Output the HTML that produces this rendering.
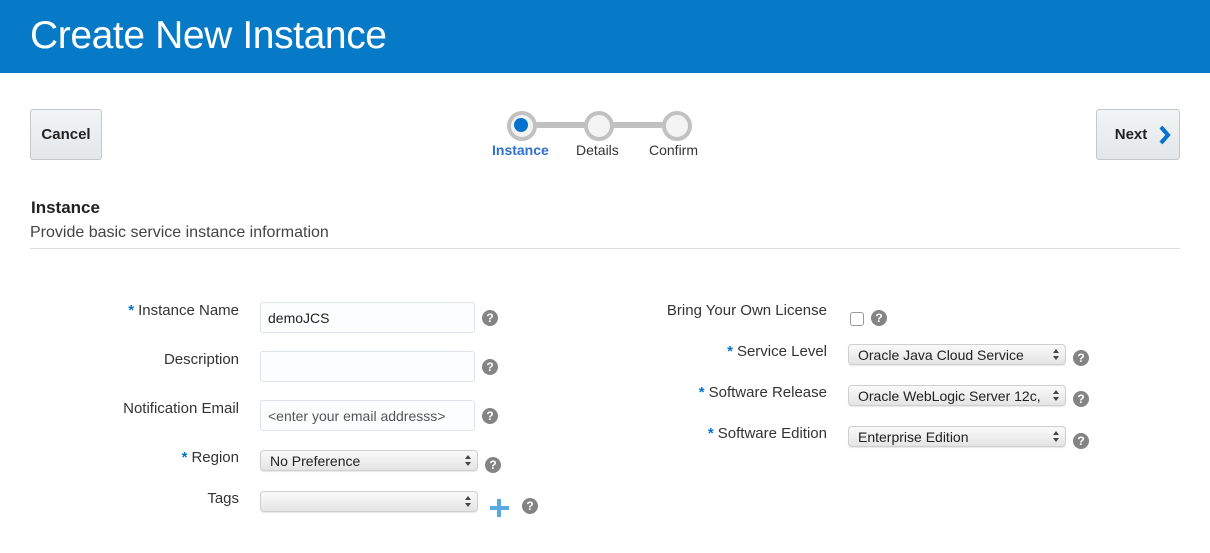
<!DOCTYPE html>
<html><head><style>
body{margin:0;width:1210px;height:553px;background:#fff;font-family:"Liberation Sans",Arial,sans-serif;position:relative;overflow:hidden;color:#333}
.a{position:absolute}
.hdr{left:0;top:0;width:1210px;height:73px;background:#0679c7}
.hdr span{position:absolute;left:30px;top:14px;font-size:39px;color:#fff;letter-spacing:-0.4px}
.btn{border:1px solid #c4c8cc;border-radius:3px;background:linear-gradient(#f2f4f5,#e3e7ea);font-weight:bold;font-size:15px;color:#222;display:flex;align-items:center;justify-content:center;box-sizing:border-box}
.lbl{font-size:15px;color:#333;text-align:right;width:220px}
.req{color:#0572ce;font-weight:bold;margin-right:4px}
.inp{border:1px solid #dde3e8;border-radius:3px;background:#fbfdfe;box-sizing:border-box;font-size:14px;padding-left:7px;display:flex;align-items:center;color:#222}
.sel{border:1px solid #cfcfcf;border-radius:4px;background:linear-gradient(#fafafa,#e4e4e4);box-sizing:border-box;font-size:14px;padding-left:9px;display:flex;align-items:center;color:#222;box-shadow:0 1px 1px rgba(0,0,0,.1)}
.sel:after{content:"";position:absolute;right:6px;top:4px;width:0;height:0;border-left:3px solid transparent;border-right:3px solid transparent;border-bottom:4px solid #444}
.sel:before{content:"";position:absolute;right:6px;bottom:4px;width:0;height:0;border-left:3px solid transparent;border-right:3px solid transparent;border-top:4px solid #444}
.q{width:16px;height:16px;border-radius:50%;background:#848484;color:#fff;font-size:12px;font-weight:bold;text-align:center;line-height:16px}
.dot{width:22px;height:22px;border-radius:50%;border:4px solid #c1c1c1;background:#f3f3f3}
</style></head><body>
<div class="a hdr"><span>Create New Instance</span></div>
<div class="a btn" style="left:30px;top:109px;width:72px;height:51px">Cancel</div>
<div class="a btn" style="left:1096px;top:109px;width:84px;height:51px;padding-right:14px">Next<svg class="a" style="right:7px;top:14px" width="14" height="22" viewBox="0 0 14 22"><path d="M3 3 L10 11 L3 19" stroke="#0572ce" stroke-width="4" fill="none"/></svg></div>
<div class="a" style="left:521px;top:122px;width:156px;height:6px;background:#c1c1c1"></div>
<div class="a dot" style="left:507px;top:111px"></div>
<div class="a" style="left:514px;top:118px;width:14px;height:14px;border-radius:50%;background:#0572ce"></div>
<div class="a dot" style="left:584px;top:111px"></div>
<div class="a dot" style="left:662px;top:111px"></div>
<div class="a" style="left:492px;top:142px;font-size:14px;font-weight:bold;color:#2f6fce">Instance</div>
<div class="a" style="left:576px;top:142px;font-size:14px;color:#333">Details</div>
<div class="a" style="left:649px;top:142px;font-size:14px;color:#333">Confirm</div>
<div class="a" style="left:31px;top:198px;font-size:17px;font-weight:bold;color:#222">Instance</div>
<div class="a" style="left:30px;top:224px;font-size:16px;color:#444">Provide basic service instance information</div>
<div class="a" style="left:30px;top:248px;width:1150px;height:1px;background:#d9dde0"></div>

<div class="a lbl" style="left:19px;top:302px"><span class="req">*</span>Instance Name</div>
<div class="a inp" style="left:260px;top:302px;width:215px;height:31px">demoJCS</div>
<div class="a q" style="left:482px;top:310px">?</div>
<div class="a lbl" style="left:19px;top:351px">Description</div>
<div class="a inp" style="left:260px;top:351px;width:215px;height:31px"></div>
<div class="a q" style="left:482px;top:359px">?</div>
<div class="a lbl" style="left:19px;top:400px">Notification Email</div>
<div class="a inp" style="left:260px;top:400px;width:215px;height:31px;color:#555">&lt;enter your email addresss&gt;</div>
<div class="a q" style="left:482px;top:408px">?</div>
<div class="a lbl" style="left:19px;top:449px"><span class="req">*</span>Region</div>
<div class="a sel" style="left:260px;top:450px;width:218px;height:21px">No Preference</div>
<div class="a q" style="left:485px;top:457px">?</div>
<div class="a lbl" style="left:19px;top:490px">Tags</div>
<div class="a sel" style="left:260px;top:491px;width:218px;height:21px"></div>
<div class="a" style="left:490px;top:506px;width:19px;height:4px;background:#5aa9e0"></div>
<div class="a" style="left:497px;top:499px;width:4px;height:18px;background:#5aa9e0"></div>
<div class="a q" style="left:522px;top:498px">?</div>

<div class="a lbl" style="left:607px;top:302px">Bring Your Own License</div>
<div class="a" style="left:850px;top:312px;width:12px;height:12px;border:1px solid #999;border-radius:3px;background:#fff"></div>
<div class="a q" style="left:871px;top:310px">?</div>
<div class="a lbl" style="left:607px;top:343px"><span class="req">*</span>Service Level</div>
<div class="a sel" style="left:848px;top:344px;width:218px;height:21px">Oracle Java Cloud Service</div>
<div class="a q" style="left:1073px;top:350px">?</div>
<div class="a lbl" style="left:607px;top:384px"><span class="req">*</span>Software Release</div>
<div class="a sel" style="left:848px;top:385px;width:218px;height:21px">Oracle WebLogic Server 12c,</div>
<div class="a q" style="left:1073px;top:391px">?</div>
<div class="a lbl" style="left:607px;top:425px"><span class="req">*</span>Software Edition</div>
<div class="a sel" style="left:848px;top:426px;width:218px;height:21px">Enterprise Edition</div>
<div class="a q" style="left:1073px;top:433px">?</div>
</body></html>
